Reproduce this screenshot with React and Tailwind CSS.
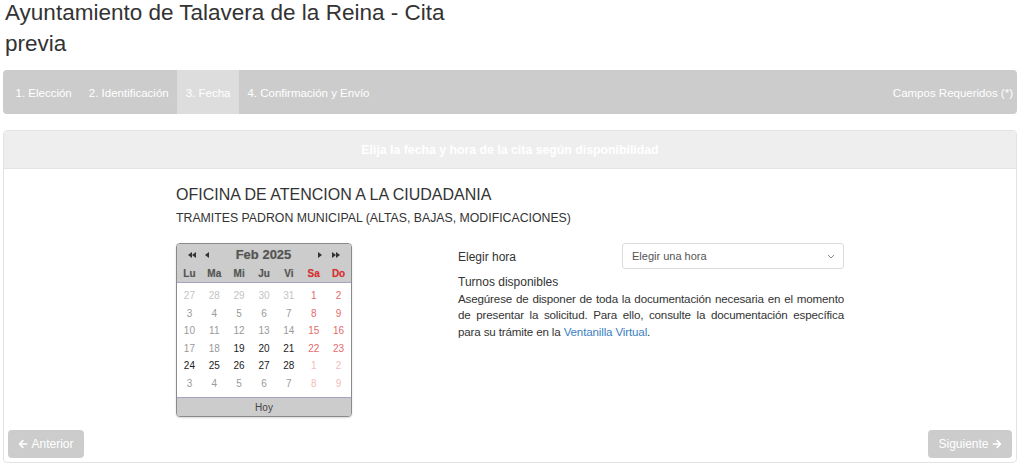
import React from "react";
import { FaArrowLeft, FaArrowRight } from "react-icons/fa";

const LIGHT = "text-[#c4c4c4]";
const GRAY = "text-[#9a9a9a]";
const DARK = "text-[#222] font-medium";
const RED = "text-[#e66a6a]";
const PINK = "text-[#f3bcbc]";

const rows = [
  [["27", LIGHT], ["28", LIGHT], ["29", LIGHT], ["30", LIGHT], ["31", LIGHT], ["1", RED], ["2", RED]],
  [["3", GRAY], ["4", GRAY], ["5", GRAY], ["6", GRAY], ["7", GRAY], ["8", RED], ["9", RED]],
  [["10", GRAY], ["11", GRAY], ["12", GRAY], ["13", GRAY], ["14", GRAY], ["15", RED], ["16", RED]],
  [["17", GRAY], ["18", GRAY], ["19", DARK], ["20", DARK], ["21", DARK], ["22", RED], ["23", RED]],
  [["24", DARK], ["25", DARK], ["26", DARK], ["27", DARK], ["28", DARK], ["1", PINK], ["2", PINK]],
  [["3", GRAY], ["4", GRAY], ["5", GRAY], ["6", GRAY], ["7", GRAY], ["8", PINK], ["9", PINK]],
];

function Tri({ dir = "left", double = false }) {
  const one = dir === "left" ? "M4 0 L4 6 L0 3 Z" : "M0 0 L0 6 L4 3 Z";
  const two = dir === "left" ? "M8 0 L8 6 L4 3 Z" : "M4 0 L4 6 L8 3 Z";
  return (
    <svg width={double ? 8 : 4} height="6" viewBox={`0 0 ${double ? 8 : 4} 6`} className="block">
      <path d={one} fill="#333" />
      {double && <path d={two} fill="#333" />}
    </svg>
  );
}

function Calendar() {
  const days = ["Lu", "Ma", "Mi", "Ju", "Vi", "Sa", "Do"];
  return (
    <div className="w-[176px] border border-[#8a8a8a] rounded-[4px] overflow-hidden bg-white font-['Liberation_Sans',Arial,sans-serif] shadow-[0_1px_2px_rgba(0,0,0,0.15)]">
      <div className="bg-[#cccccc]">
        <div className="h-[22px] flex items-center px-[8px]">
          <span className="w-[14px] flex justify-center"><Tri dir="left" double /></span>
          <span className="w-[14px] flex justify-center ml-[1px]"><Tri dir="left" /></span>
          <span className="flex-1 text-center text-[13px] font-bold text-[#555] leading-none pb-[1px] [text-shadow:0_0_1px_rgba(0,0,0,0.25)]">Feb 2025</span>
          <span className="w-[14px] flex justify-center mr-[2px]"><Tri dir="right" /></span>
          <span className="w-[14px] flex justify-center"><Tri dir="right" double /></span>
        </div>
        <div className="grid grid-cols-7 h-[17px] items-center border-b border-[#a3a3c2]">
          {days.map((d, i) => (
            <span
              key={d}
              className={`text-center text-[10px] font-bold leading-none [text-shadow:0_0_1px_rgba(0,0,0,0.2)] ${i >= 5 ? "text-[#e02b2b]" : "text-[#555]"}`}
            >
              {d}
            </span>
          ))}
        </div>
      </div>
      <div className="pt-[4px] pb-[5px]">
        {rows.map((r, ri) => (
          <div key={ri} className="grid grid-cols-7 h-[17.5px] items-center">
            {r.map(([n, c], ci) => (
              <span key={ci} className={`text-center text-[10px] leading-none pt-[1px] ${c}`}>{n}</span>
            ))}
          </div>
        ))}
      </div>
      <div className="h-[19px] bg-[#cccccc] border-t border-[#a3a3c2] flex items-center justify-center text-[10px] text-[#444]">
        Hoy
      </div>
    </div>
  );
}

export default function App() {
  return (
    <div className="w-[1024px] h-[464px] overflow-hidden bg-white text-[#333] pl-[3px] pr-[7px] font-['Liberation_Sans',Arial,sans-serif]">
      <h1 className="w-[480px] pl-[2px] text-[22.5px] leading-[31px] font-normal -mt-[3px]">
        Ayuntamiento de Talavera de la Reina - Cita previa
      </h1>
      <nav className="mt-[11px] h-[44px] bg-[#cccccc] rounded-[4px] flex items-stretch pl-[4px] pr-[4px] text-white text-[11.5px]">
        <span className="px-[8.5px] pt-[3px] flex items-center">1. Elección</span>
        <span className="px-[8.5px] pt-[3px] flex items-center">2. Identificación</span>
        <span className="px-[8.5px] pt-[3px] flex items-center bg-[#dddddd]">3. Fecha</span>
        <span className="px-[8.5px] pt-[3px] flex items-center">4. Confirmación y Envío</span>
        <span className="ml-auto pt-[3px] flex items-center">Campos Requeridos (*)</span>
      </nav>
      <section className="mt-[16px] border border-[#e3e3e3] rounded-[4px] overflow-hidden">
        <div className="h-[38px] bg-[#eeeeee] border-b border-[#e3e3e3] flex items-center justify-center text-white font-bold text-[12.3px] pt-[1px]">
          Elija la fecha y hora de la cita según disponibilidad
        </div>
        <div className="px-[4px] pb-[4px]">
          <div className="w-[668px] mx-auto pt-[15px]">
            <div className="text-[16px] leading-[22px]">OFICINA DE ATENCION A LA CIUDADANIA</div>
            <div className="mt-[4px] text-[12.3px] leading-[17px]">TRAMITES PADRON MUNICIPAL (ALTAS, BAJAS, MODIFICACIONES)</div>
            <div className="mt-[16px] flex">
              <Calendar />
              <div className="ml-[106px] w-[386px] text-[12px]">
                <div className="flex items-center h-[26px]">
                  <span className="w-[164px] pt-[2px]">Elegir hora</span>
                  <div className="flex-1 h-[26px] border border-[#dcdcdc] rounded-[3px] flex items-center justify-between pl-[9px] pr-[8px] text-[11px] text-[#555]">
                    <span>Elegir una hora</span>
                    <svg width="8" height="5" viewBox="0 0 8 5" className="block">
                      <path d="M1 1 L4 4 L7 1" fill="none" stroke="#888" strokeWidth="1" />
                    </svg>
                  </div>
                </div>
                <div className="mt-[5px] leading-[16.5px]">Turnos disponibles</div>
                <p className="leading-[16.5px] text-justify text-[11.6px] tracking-[-0.15px]">
                  Asegúrese de disponer de toda la documentación necesaria en el momento de presentar la solicitud. Para ello, consulte la documentación específica para su trámite en la{" "}
                  <a className="text-[#3a7fc1]">Ventanilla Virtual</a>.
                </p>
              </div>
            </div>
          </div>
          <div className="mt-[13px] flex justify-between">
            <button className="h-[28px] w-[76px] bg-[#cccccc] rounded-[4px] text-white text-[12px] flex items-center justify-center gap-[3px]">
              <FaArrowLeft size={10} /> Anterior
            </button>
            <button className="h-[28px] w-[84px] bg-[#cccccc] rounded-[4px] text-white text-[12px] flex items-center justify-center gap-[3px]">
              Siguiente <FaArrowRight size={10} />
            </button>
          </div>
        </div>
      </section>
    </div>
  );
}
